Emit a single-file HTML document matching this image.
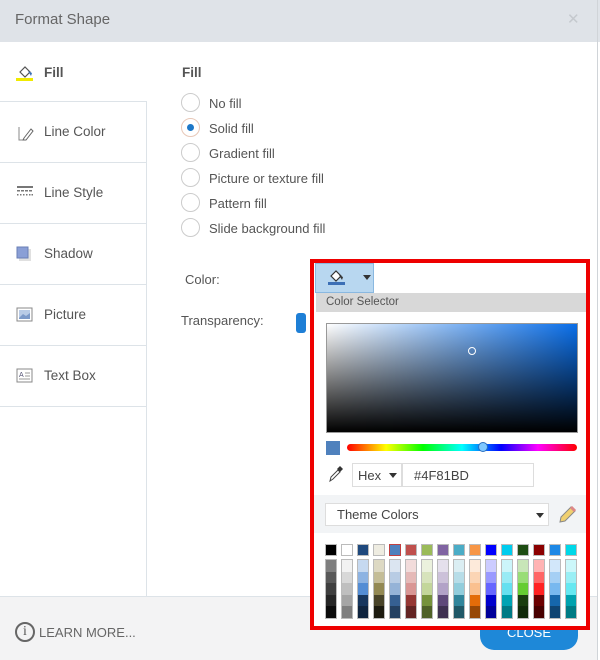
<!DOCTYPE html>
<html><head><meta charset="utf-8"><style>
*{margin:0;padding:0;box-sizing:border-box}
body{width:600px;height:660px;position:relative;overflow:hidden;background:#fff;font-family:"Liberation Sans",sans-serif;font-size:13px;color:#555}
.a{position:absolute}
.tab{position:absolute;left:0;width:147px;height:61px;border-top:1px solid #dde3e8;border-right:1px solid #dde3e8}
.tab span{position:absolute;left:44px;top:22px;font-size:13.5px;color:#555}
.tab svg{position:absolute;left:16px;top:22px}
.r{position:absolute;left:181px;width:19px;height:19px;border:1px solid #ccc;border-radius:50%;background:#fff}
.rl{position:absolute;left:209px;font-size:13px;color:#555}
.sw{position:absolute;width:12px;height:12px;border:1px solid #bbb}
.sh{position:absolute;width:12px;height:60px;border:1px solid #bbb}
.sh i{display:block;height:11.6px}
</style></head><body>
<div class="a" style="left:0;top:0;width:600px;height:42px;background:#dfe3e8"></div>
<div class="a" style="left:15px;top:11px;font-size:15px;color:#666">Format Shape</div>
<div class="a" style="left:567px;top:10px;font-size:15px;color:#c5c9ce">✕</div>
<div class="a" style="left:597px;top:0;width:1px;height:660px;background:#d0d4d8"></div>

<!-- sidebar -->
<div class="a" style="left:16px;top:64px"><svg width="18" height="18"><path d="M4 8 L9 3 L14 8 L9 13 Z" fill="#fff" stroke="#555" stroke-width="1.2"/><path d="M12 7 L16 9 L15 12" fill="#3b6fb6"/><rect x="0" y="14" width="17" height="3" fill="#f0ea00"/></svg></div>
<div class="a" style="left:44px;top:65px;font-size:13.5px;font-weight:bold;color:#555">Fill</div>
<div class="a" style="left:146px;top:101px;width:1px;height:495px;background:#dde3e8"></div>
<div class="tab" style="top:101px"><svg width="18" height="18"><path d="M3 3 V16 H9" fill="none" stroke="#888" stroke-width="1"/><path d="M8 14 L15 5 L17 7 L10 16 L7 16 Z" fill="#fff" stroke="#666"/></svg><span>Line Color</span></div>
<div class="tab" style="top:162px"><svg width="18" height="14"><g fill="#777"><rect x="1" y="1" width="16" height="2"/><rect x="1" y="5" width="3" height="1.5"/><rect x="5" y="5" width="3" height="1.5"/><rect x="9" y="5" width="3" height="1.5"/><rect x="13" y="5" width="3" height="1.5"/><rect x="1" y="9" width="1.5" height="1.5"/><rect x="4" y="9" width="1.5" height="1.5"/><rect x="7" y="9" width="1.5" height="1.5"/><rect x="10" y="9" width="1.5" height="1.5"/><rect x="13" y="9" width="1.5" height="1.5"/><rect x="15.5" y="9" width="1.5" height="1.5"/></g></svg><span>Line Style</span></div>
<div class="tab" style="top:223px"><svg width="18" height="18"><rect x="3" y="3" width="12" height="12" fill="#ccc" opacity=".6"/><rect x="1" y="1" width="11" height="11" fill="#8a9fd6" stroke="#6a7fb6"/></svg><span>Shadow</span></div>
<div class="tab" style="top:284px"><svg width="18" height="16"><rect x="1" y="1" width="15" height="13" fill="#fff" stroke="#888"/><rect x="3" y="3" width="11" height="9" fill="#b9cbe6"/><path d="M3 11 L7 7 L10 9 L14 6 V12 H3Z" fill="#7d9ac9"/></svg><span>Picture</span></div>
<div class="tab" style="top:345px;height:62px;border-bottom:1px solid #dde3e8"><svg width="18" height="16"><rect x="1" y="1" width="15" height="13" fill="#fff" stroke="#888"/><text x="3" y="9" font-size="7" fill="#557" font-family="Liberation Sans">A</text><path d="M9 5H14M9 8H14M3 11H14" stroke="#999"/></svg><span>Text Box</span></div>

<!-- fill options -->
<div class="a" style="left:182px;top:65px;font-size:13.5px;font-weight:bold;color:#555">Fill</div>
<div class="r" style="top:93px"></div><div class="rl" style="top:96px">No fill</div>
<div class="r" style="top:118px;border-color:#e8c8b8"><div class="a" style="left:5px;top:5px;width:7px;height:7px;border-radius:50%;background:#1e78c8"></div></div><div class="rl" style="top:121px">Solid fill</div>
<div class="r" style="top:143px"></div><div class="rl" style="top:146px">Gradient fill</div>
<div class="r" style="top:168px"></div><div class="rl" style="top:171px">Picture or texture fill</div>
<div class="r" style="top:193px"></div><div class="rl" style="top:196px">Pattern fill</div>
<div class="r" style="top:218px"></div><div class="rl" style="top:221px">Slide background fill</div>
<div class="a" style="left:185px;top:272px">Color:</div>
<div class="a" style="left:181px;top:313px">Transparency:</div>
<div class="a" style="left:296px;top:313px;width:10px;height:20px;background:#1e7fd6;border-radius:3px"></div>

<!-- footer -->
<div class="a" style="left:0;top:596px;width:597px;height:64px;background:#f3f3f4;border-top:1px solid #dde3e8"></div>
<div class="a" style="left:15px;top:622px;width:20px;height:20px;border:2px solid #666;border-radius:50%;font-family:'Liberation Serif',serif;font-size:14px;color:#555;text-align:center;line-height:16px">i</div>
<div class="a" style="left:39px;top:625px;font-size:13px;color:#666">LEARN MORE...</div>
<div class="a" style="left:480px;top:616px;width:98px;height:34px;background:#1e88d8;border-radius:14px;color:#fff;font-size:13px;text-align:center;line-height:34px">CLOSE</div>

<!-- popup -->
<div class="a" style="left:310px;top:259px;width:280px;height:371px;background:#fff;border:4px solid #ee0000"></div>
<div class="a" style="left:315px;top:263px;width:59px;height:30px;background:#b8d7f0;border:1px solid #8ab8e0"></div>
<div class="a" style="left:328px;top:268px"><svg width="18" height="18"><path d="M3 8 L8 3 L13 8 L8 13 Z" fill="#fff" stroke="#333" stroke-width="1.2"/><path d="M11 7 L15 9 L14 12" fill="#333"/><rect x="0" y="14" width="17" height="3" fill="#3b6fb6"/></svg></div>
<div class="a" style="left:363px;top:275px;width:0;height:0;border-left:4px solid transparent;border-right:4px solid transparent;border-top:5px solid #333"></div>
<div class="a" style="left:316px;top:293px;width:270px;height:19px;background:#d8d8d8"></div>
<div class="a" style="left:326px;top:296px;font-size:11.5px;color:#555">Color Selector</div>
<div class="a" style="left:326px;top:323px;width:252px;height:110px;border:1px solid #999;background:linear-gradient(to bottom,rgba(0,0,0,0),#000),linear-gradient(to right,#fff,#0a6ee8)"></div>
<div class="a" style="left:468px;top:347px;width:8px;height:8px;border:1px solid #fff;border-radius:50%"></div>
<div class="a" style="left:326px;top:441px;width:14px;height:14px;background:#4f81bd"></div>
<div class="a" style="left:347px;top:444px;width:230px;height:7px;border-radius:4px;background:linear-gradient(to right,#f00,#ff0 17%,#0f0 33%,#0ff 50%,#00f 67%,#f0f 83%,#f00)"></div>
<div class="a" style="left:478px;top:442px;width:10px;height:10px;border-radius:50%;border:1.5px solid #2a6fc0;background:#7fc8ff"></div>
<div class="a" style="left:328px;top:465px"><svg width="16" height="18"><path d="M2 16 L3 12 L10 5 L12 7 L5 14 Z" fill="#fff" stroke="#444"/><path d="M9 4 L12 1 L15 4 L12 7 Z" fill="#333"/></svg></div>
<div class="a" style="left:352px;top:463px;width:50px;height:24px;border:1px solid #ddd;background:#fff"></div>
<div class="a" style="left:358px;top:468px;color:#444">Hex</div>
<div class="a" style="left:389px;top:473px;width:0;height:0;border-left:4px solid transparent;border-right:4px solid transparent;border-top:5px solid #333"></div>
<div class="a" style="left:402px;top:463px;width:132px;height:24px;border:1px solid #ddd;background:#fff"></div>
<div class="a" style="left:414px;top:468px;color:#444">#4F81BD</div>
<div class="a" style="left:314px;top:495px;width:272px;height:38px;background:#f2f4f6"></div>
<div class="a" style="left:325px;top:503px;width:224px;height:23px;border:1px solid #ddd;background:#fff"></div>
<div class="a" style="left:337px;top:507px;color:#444">Theme Colors</div>
<div class="a" style="left:536px;top:513px;width:0;height:0;border-left:4px solid transparent;border-right:4px solid transparent;border-top:5px solid #333"></div>
<div class="a" style="left:557px;top:505px"><svg width="20" height="20"><path d="M3 17 L4 12 L14 2 L18 6 L8 16 Z" fill="#f0d070" stroke="#888"/><path d="M14 2 L18 6" stroke="#d88" stroke-width="3"/></svg></div>

<!-- swatches -->
<div class="sw" style="left:325px;top:544px;background:#000"></div>
<div class="sw" style="left:341px;top:544px;background:#fff"></div>
<div class="sw" style="left:357px;top:544px;background:#1f497d"></div>
<div class="sw" style="left:373px;top:544px;background:#eeece1"></div>
<div class="sw" style="left:389px;top:544px;background:#4f81bd;border-color:#c04040"></div>
<div class="sw" style="left:405px;top:544px;background:#c0504d"></div>
<div class="sw" style="left:421px;top:544px;background:#9bbb59"></div>
<div class="sw" style="left:437px;top:544px;background:#8064a2"></div>
<div class="sw" style="left:453px;top:544px;background:#4bacc6"></div>
<div class="sw" style="left:469px;top:544px;background:#f79646"></div>
<div class="sw" style="left:485px;top:544px;background:#0000ff"></div>
<div class="sw" style="left:501px;top:544px;background:#00ccee"></div>
<div class="sw" style="left:517px;top:544px;background:#1e4d13"></div>
<div class="sw" style="left:533px;top:544px;background:#8b0000"></div>
<div class="sw" style="left:549px;top:544px;background:#1e88e5"></div>
<div class="sw" style="left:565px;top:544px;background:#00d8e8"></div>

<div class="sh" style="left:325px;top:559px"><i style="background:#7f7f7f"></i><i style="background:#595959"></i><i style="background:#3f3f3f"></i><i style="background:#262626"></i><i style="background:#0c0c0c"></i></div>
<div class="sh" style="left:341px;top:559px"><i style="background:#f2f2f2"></i><i style="background:#d8d8d8"></i><i style="background:#bfbfbf"></i><i style="background:#a5a5a5"></i><i style="background:#7f7f7f"></i></div>
<div class="sh" style="left:357px;top:559px"><i style="background:#c6d9f0"></i><i style="background:#8db3e2"></i><i style="background:#548dd4"></i><i style="background:#17365d"></i><i style="background:#0f243e"></i></div>
<div class="sh" style="left:373px;top:559px"><i style="background:#ddd9c3"></i><i style="background:#c4bd97"></i><i style="background:#938953"></i><i style="background:#494429"></i><i style="background:#1d1b10"></i></div>
<div class="sh" style="left:389px;top:559px"><i style="background:#dbe5f1"></i><i style="background:#b8cce4"></i><i style="background:#95b3d7"></i><i style="background:#366092"></i><i style="background:#244061"></i></div>
<div class="sh" style="left:405px;top:559px"><i style="background:#f2dcdb"></i><i style="background:#e5b9b7"></i><i style="background:#d99694"></i><i style="background:#953734"></i><i style="background:#632423"></i></div>
<div class="sh" style="left:421px;top:559px"><i style="background:#ebf1dd"></i><i style="background:#d7e3bc"></i><i style="background:#c3d69b"></i><i style="background:#76923c"></i><i style="background:#4f6128"></i></div>
<div class="sh" style="left:437px;top:559px"><i style="background:#e5e0ec"></i><i style="background:#ccc1d9"></i><i style="background:#b2a2c7"></i><i style="background:#5f497a"></i><i style="background:#3f3151"></i></div>
<div class="sh" style="left:453px;top:559px"><i style="background:#dbeef3"></i><i style="background:#b7dde8"></i><i style="background:#92cddc"></i><i style="background:#31859b"></i><i style="background:#205867"></i></div>
<div class="sh" style="left:469px;top:559px"><i style="background:#fdeada"></i><i style="background:#fbd5b5"></i><i style="background:#fac08f"></i><i style="background:#e36c09"></i><i style="background:#974806"></i></div>
<div class="sh" style="left:485px;top:559px"><i style="background:#ccccff"></i><i style="background:#9999ff"></i><i style="background:#6666ff"></i><i style="background:#0000cc"></i><i style="background:#000099"></i></div>
<div class="sh" style="left:501px;top:559px"><i style="background:#ccf5fa"></i><i style="background:#99ebf5"></i><i style="background:#66e0f0"></i><i style="background:#00a3b3"></i><i style="background:#007a85"></i></div>
<div class="sh" style="left:517px;top:559px"><i style="background:#c8e6b8"></i><i style="background:#99dd77"></i><i style="background:#66cc33"></i><i style="background:#1a3d0f"></i><i style="background:#112a0a"></i></div>
<div class="sh" style="left:533px;top:559px"><i style="background:#ffb3b3"></i><i style="background:#ff6666"></i><i style="background:#ff2222"></i><i style="background:#6b0000"></i><i style="background:#470000"></i></div>
<div class="sh" style="left:549px;top:559px"><i style="background:#d2e7fa"></i><i style="background:#a5cff4"></i><i style="background:#78b8ef"></i><i style="background:#1666ab"></i><i style="background:#0f4472"></i></div>
<div class="sh" style="left:565px;top:559px"><i style="background:#ccf7fa"></i><i style="background:#99eff5"></i><i style="background:#66e8f1"></i><i style="background:#00a2ae"></i><i style="background:#007c85"></i></div>
</body></html>
